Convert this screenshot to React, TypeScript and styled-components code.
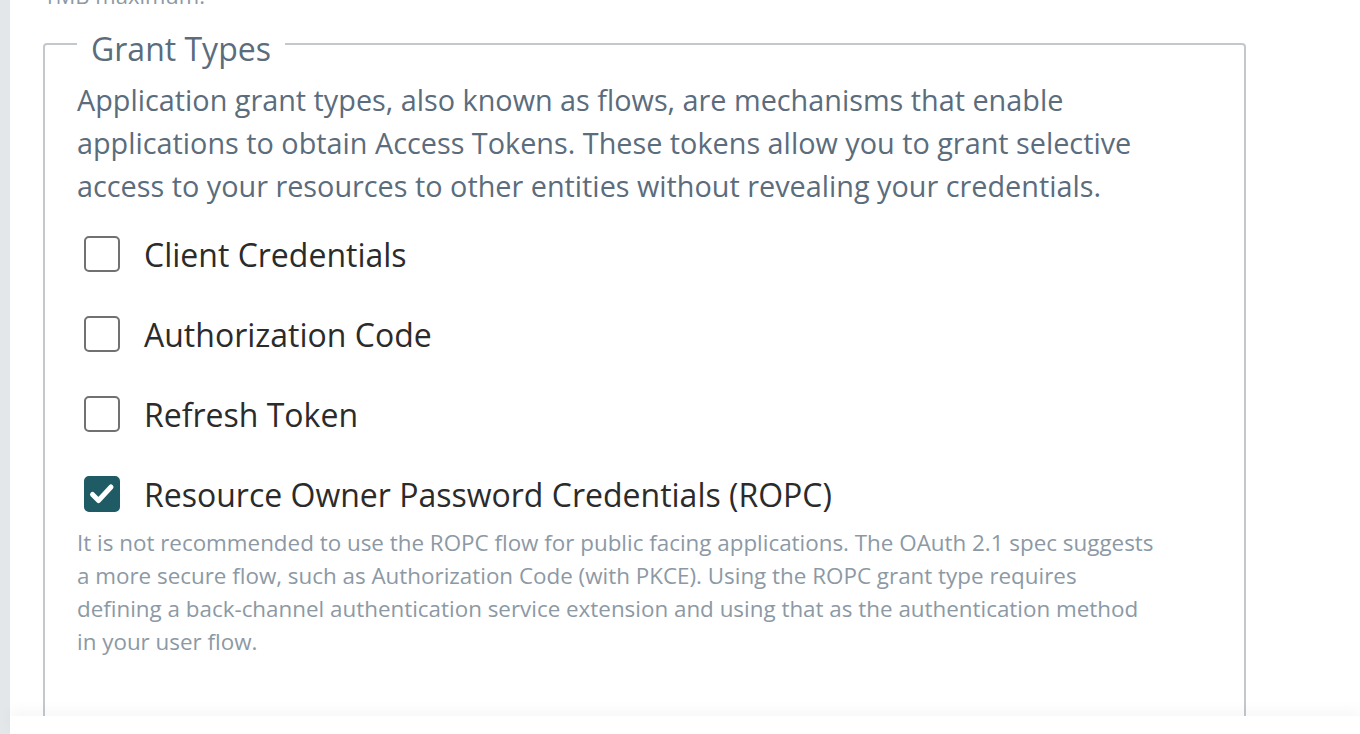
import React from "react";
import styled, { createGlobalStyle } from "styled-components";

const GlobalStyle = createGlobalStyle`
  html, body {
    margin: 0;
    padding: 0;
    height: 100%;
    background: #fff;
    font-family: "Open Sans", "Noto Sans", sans-serif;
  }
  #root { height: 100%; }
`;

type Grant = { id: string; label: string; checked: boolean };

const grants: Grant[] = [
  { id: "client", label: "Client Credentials", checked: false },
  { id: "code", label: "Authorization Code", checked: false },
  { id: "refresh", label: "Refresh Token", checked: false },
  { id: "ropc", label: "Resource Owner Password Credentials (ROPC)", checked: true },
];

const CheckIcon = () => (
  <svg width="32" height="32" viewBox="0 0 32 32">
    <path
      d="M6.5 16.5 L12.5 22.5 L25 9"
      fill="none"
      stroke="#fff"
      strokeWidth="5"
      strokeLinecap="round"
      strokeLinejoin="round"
    />
  </svg>
);

const App = () => {
  return (
    <Page>
      <GlobalStyle />
      <SideStrip />
      <Main>
        <Scroller>
          <ScrollContent>
            <Hint>1MB maximum.</Hint>
            <Fieldset>
              <Legend>Grant Types</Legend>
              <Description>
                Application grant types, also known as flows, are mechanisms that enable
                applications to obtain Access Tokens. These tokens allow you to grant selective
                access to your resources to other entities without revealing your credentials.
              </Description>
              <Options>
                {grants.map((g) => (
                  <OptionRow key={g.id}>
                    <Box $checked={g.checked}>{g.checked && <CheckIcon />}</Box>
                    <OptionLabel>{g.label}</OptionLabel>
                  </OptionRow>
                ))}
              </Options>
              <Note>
                It is not recommended to use the ROPC flow for public facing applications. The OAuth 2.1 spec suggests
                a more secure flow, such as Authorization Code (with PKCE). Using the ROPC grant type requires
                defining a back-channel authentication service extension and using that as the authentication method
                in your user flow.
              </Note>
            </Fieldset>
          </ScrollContent>
        </Scroller>
        <Footer />
      </Main>
    </Page>
  );
};

export default App;

const Page = styled.div`
  display: flex;
  height: 734px;
  overflow: hidden;
`;

const SideStrip = styled.div`
  width: 10px;
  flex-shrink: 0;
  background: #e4e7e9;
`;

const Main = styled.div`
  flex: 1;
  display: flex;
  flex-direction: column;
  min-width: 0;
`;

const Scroller = styled.div`
  flex: 1;
  overflow: hidden;
`;

/* the panel is scrolled a little, so the hint above it is cut at the top */
const ScrollContent = styled.div`
  margin-top: -21px;
  padding-left: 33px;
`;

const Hint = styled.p`
  margin: 0 0 7px;
  font-size: 22px;
  line-height: 33px;
  color: #8c99a5;
`;

const Fieldset = styled.fieldset`
  width: 1203px;
  box-sizing: border-box;
  margin: 0;
  padding: 0 32px 120px 32px;
  border: 2px solid #c3c8cd;
  border-radius: 4px;
`;

const Legend = styled.legend`
  margin-left: 0;
  padding: 10px 14px 0;
  font-size: 32px;
  line-height: 40px;
  color: #5b6c7c;
`;

const Description = styled.p`
  margin: 9px 0 0;
  max-width: 1090px;
  font-size: 28.8px;
  line-height: 43px;
  color: #5b6c7c;
`;

const Options = styled.div`
  display: flex;
  flex-direction: column;
  gap: 20px;
  margin-top: 17px;
`;

const OptionRow = styled.label`
  display: flex;
  align-items: center;
  gap: 24px;
  height: 60px;
  padding-left: 7px;
`;

const Box = styled.span<{ $checked: boolean }>`
  width: 36px;
  height: 36px;
  box-sizing: border-box;
  flex-shrink: 0;
  display: flex;
  align-items: center;
  justify-content: center;
  border-radius: 5px;
  border: 2px solid ${(p) => (p.$checked ? "#1f5b65" : "#717171")};
  background: ${(p) => (p.$checked ? "#1f5b65" : "#fff")};
`;

const OptionLabel = styled.span`
  font-size: 32px;
  color: #2b2b2b;
`;

const Note = styled.p`
  margin: 2px 0 0;
  max-width: 1082px;
  font-size: 22.4px;
  line-height: 33px;
  color: #8c99a5;
`;

const Footer = styled.div`
  height: 18px;
  flex-shrink: 0;
  background: #fff;
  box-shadow: 0 -6px 14px rgba(0, 0, 0, 0.035);
  position: relative;
  z-index: 1;
`;
